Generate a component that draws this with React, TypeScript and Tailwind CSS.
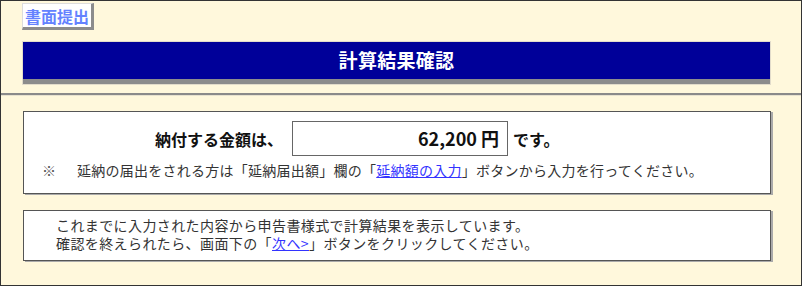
import React from 'react';

const font = { fontFamily: '"Noto Sans CJK JP", "Noto Sans", sans-serif' };

const App = () => {
  return (
    <div
      className="w-[802px] h-[286px] border border-[#333] bg-[#fff8dc] overflow-hidden text-[#333]"
      style={font}
    >
      <div className="pl-[21px] pt-[2px]">
        <button className="h-[27px] px-[2px] bg-white border-t border-l border-[#ddd] border-r-[3px] border-b-[3px] border-r-[#8c8c8c] border-b-[#8c8c8c] text-[16px] leading-[20px] font-bold text-[#6482ff]">
          書面提出
        </button>
        <div className="mt-[11px] w-[749px] border border-[#e2dccb]">
          <div className="h-[37px] bg-[#000099] flex items-center justify-center text-white text-[19px] font-bold tracking-[0.3px]">
            計算結果確認
          </div>
          <div className="h-[5px] bg-[#8c8c8c]" />
        </div>
      </div>

      <div className="mt-[8px] h-[2px] bg-[#8a8a8a]" />
      <div className="h-px bg-[#e8e2cf]" />

      <div className="pl-[22px] pt-[15px]">
        <div className="w-[748px] h-[83px] bg-white border border-[#555] shadow-[2px_1px_0_#aaa] pt-[9px]">
          <div className="flex items-center pl-[131px] text-[16px] font-bold text-[#111]">
            <span>納付する金額は、</span>
            <div className="ml-[9px] w-[216px] h-[35px] border border-[#666] flex items-center justify-end pr-[8px] text-[18px]">
              62,200&nbsp;円
            </div>
            <span className="ml-[5px]">です。</span>
          </div>
          <div className="flex items-center mt-[5px] pl-[18px] text-[14px] leading-[18px] tracking-[0.25px]">
            <span className="w-[35px] text-[#555]">※</span>
            <span>
              延納の届出をされる方は「延納届出額」欄の「
              <a href="#" className="text-[#3333ff] underline">延納額の入力</a>
              」ボタンから入力を行ってください。
            </span>
          </div>
        </div>

        <div className="mt-[16px] w-[748px] h-[51px] bg-white border border-[#555] shadow-[2px_1px_0_#aaa] pt-[5px] pl-[32px] text-[14px] leading-[18px] tracking-[0.4px]">
          <p>これまでに入力された内容から申告書様式で計算結果を表示しています。</p>
          <p>
            確認を終えられたら、画面下の「
            <a href="#" className="text-[#3333ff] underline">次へ&gt;</a>
            」ボタンをクリックしてください。
          </p>
        </div>
      </div>
    </div>
  );
};

export default App;
